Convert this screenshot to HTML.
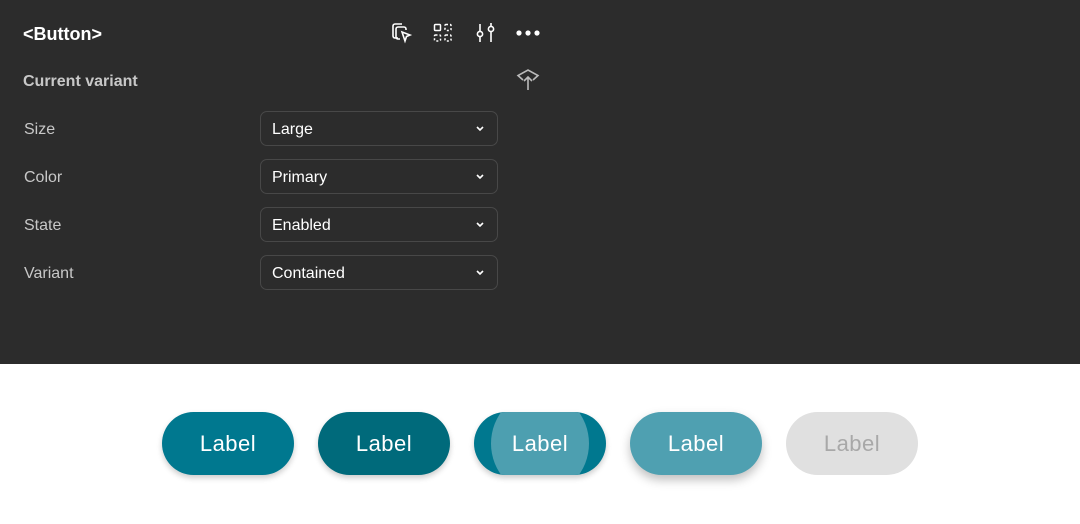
<!DOCTYPE html>
<html><head><style>
body{margin:0;width:1080px;height:524px;background:#fff;font-family:"Liberation Sans",sans-serif;position:relative;overflow:hidden}
.panel{position:absolute;left:0;top:0;width:1080px;height:364px;background:#2c2c2c}
.t{position:absolute;color:#fff}
.lbl{position:absolute;left:24px;color:#c8c8c8;font-size:16px}
.sel{position:absolute;left:260px;height:33px;border:1.5px solid #484848;border-radius:7px;color:#fff;font-size:16px;line-height:36px;padding-left:11px;box-sizing:content-box;width:225px}
.sel svg{position:absolute;right:12px;top:13px}
.btn{position:absolute;top:412px;width:132px;height:63px;border-radius:32px;color:#fff;font-size:22px;line-height:63px;text-align:center;letter-spacing:.5px;box-shadow:0 3px 6px rgba(0,0,0,.2);overflow:hidden}
</style></head><body>
<div class="panel">
<div class="t" style="left:23px;top:24px;font-size:18px;font-weight:bold">&lt;Button&gt;</div>
<svg style="position:absolute;left:390px;top:22px" width="24" height="22" fill="none" stroke="#fff" stroke-width="1.6"><path d="M8 16H5a2 2 0 0 1-2-2V4a2 2 0 0 1 2-2h7"/><path d="M10 17H8a2 2 0 0 1-2-2V7a2 2 0 0 1 2-2h6a2 2 0 0 1 2 2v1"/><path d="M12 10l8 3-3.5 1.5L15 19z"/></svg>
<svg style="position:absolute;left:433px;top:23px" width="22" height="20" fill="none" stroke="#fff" stroke-width="1.5"><rect x="1.5" y="1.5" width="6" height="6" rx="1"/><rect x="12" y="1.5" width="6" height="6" rx="1" stroke-dasharray="2 2"/><rect x="1.5" y="12" width="6" height="6" rx="1" stroke-dasharray="2 2"/><rect x="12" y="12" width="6" height="6" rx="1" stroke-dasharray="2 2"/></svg>
<svg style="position:absolute;left:475px;top:21px" width="22" height="22" fill="none" stroke="#fff" stroke-width="1.6"><path d="M5 3v7M5 16v5M16 2v3M16 11v10"/><circle cx="5" cy="13" r="2.6"/><circle cx="16" cy="8" r="2.6"/></svg>
<svg style="position:absolute;left:515px;top:29px" width="26" height="8" fill="#fff"><circle cx="4" cy="4" r="2.6"/><circle cx="13" cy="4" r="2.6"/><circle cx="22" cy="4" r="2.6"/></svg>
<svg style="position:absolute;left:516px;top:68px" width="24" height="24" fill="none" stroke="#bbb" stroke-width="1.6"><path d="M7 12L2 7.5 12 2l10 5.5L17 12"/><path d="M12 22V9M8 13l4-4 4 4"/></svg>
<div class="lbl" style="top:73px;color:#c8c8c8;font-size:16px;left:23px;font-weight:bold">Current variant</div>
<div class="lbl" style="top:121px">Size</div>
<div class="lbl" style="top:169px">Color</div>
<div class="lbl" style="top:217px">State</div>
<div class="lbl" style="top:265px">Variant</div>
<div class="sel" style="top:111px">Large<svg width="10" height="8" fill="none" stroke="#fff" stroke-width="1.6"><path d="M2 2l3 3 3-3"/></svg></div>
<div class="sel" style="top:159px">Primary<svg width="10" height="8" fill="none" stroke="#fff" stroke-width="1.6"><path d="M2 2l3 3 3-3"/></svg></div>
<div class="sel" style="top:207px">Enabled<svg width="10" height="8" fill="none" stroke="#fff" stroke-width="1.6"><path d="M2 2l3 3 3-3"/></svg></div>
<div class="sel" style="top:255px">Contained<svg width="10" height="8" fill="none" stroke="#fff" stroke-width="1.6"><path d="M2 2l3 3 3-3"/></svg></div>
</div>
<div class="btn" style="left:162px;background:#00788f">Label</div>
<div class="btn" style="left:318px;background:#006a7b">Label</div>
<div class="btn" style="left:474px;background:#00788f"><div style="position:absolute;left:17px;top:-20px;width:98px;height:103px;border-radius:50%;background:#4d9fb0"></div><span style="position:relative">Label</span></div>
<div class="btn" style="left:630px;background:#4fa0b1;box-shadow:0 5px 10px rgba(0,0,0,.25)">Label</div>
<div class="btn" style="left:786px;background:#e0e0e0;color:#a8a8a8;box-shadow:none">Label</div>
</body></html>
